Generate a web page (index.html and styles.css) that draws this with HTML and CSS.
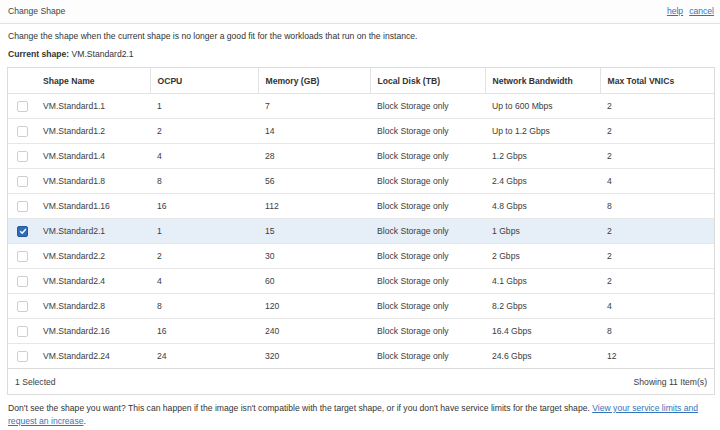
FILE: index.html
```html
<!DOCTYPE html>
<html>
<head>
<meta charset="utf-8">
<link rel="stylesheet" href="styles.css">
</head>
<body>
<div class="page">
  <header class="topbar">
    <span class="title">Change Shape</span>
    <nav class="links"><a href="#">help</a><a href="#">cancel</a></nav>
  </header>
  <main class="content">
    <p class="desc">Change the shape when the current shape is no longer a good fit for the workloads that run on the instance.</p>
    <p class="current"><b>Current shape:</b> VM.Standard2.1</p>
    <div class="grid">
      <table>
        <colgroup>
          <col class="c-check"><col class="c-name"><col class="c-ocpu"><col class="c-mem"><col class="c-disk"><col class="c-net"><col>
        </colgroup>
        <thead>
          <tr>
            <th class="chk"></th>
            <th class="name">Shape Name</th>
            <th>OCPU</th>
            <th>Memory (GB)</th>
            <th>Local Disk (TB)</th>
            <th>Network Bandwidth</th>
            <th>Max Total VNICs</th>
          </tr>
        </thead>
        <tbody>
          <tr><td class="chk"><span class="box"></span></td><td class="name">VM.Standard1.1</td><td>1</td><td>7</td><td>Block Storage only</td><td>Up to 600 Mbps</td><td>2</td></tr>
          <tr><td class="chk"><span class="box"></span></td><td class="name">VM.Standard1.2</td><td>2</td><td>14</td><td>Block Storage only</td><td>Up to 1.2 Gbps</td><td>2</td></tr>
          <tr><td class="chk"><span class="box"></span></td><td class="name">VM.Standard1.4</td><td>4</td><td>28</td><td>Block Storage only</td><td>1.2 Gbps</td><td>2</td></tr>
          <tr><td class="chk"><span class="box"></span></td><td class="name">VM.Standard1.8</td><td>8</td><td>56</td><td>Block Storage only</td><td>2.4 Gbps</td><td>4</td></tr>
          <tr><td class="chk"><span class="box"></span></td><td class="name">VM.Standard1.16</td><td>16</td><td>112</td><td>Block Storage only</td><td>4.8 Gbps</td><td>8</td></tr>
          <tr class="selected"><td class="chk"><span class="box checked"><svg viewBox="0 0 10 10" width="10" height="10"><path d="M2.2 5.2 L4.2 7.2 L7.9 2.9" fill="none" stroke="#fff" stroke-width="1.5"/></svg></span></td><td class="name">VM.Standard2.1</td><td>1</td><td>15</td><td>Block Storage only</td><td>1 Gbps</td><td>2</td></tr>
          <tr><td class="chk"><span class="box"></span></td><td class="name">VM.Standard2.2</td><td>2</td><td>30</td><td>Block Storage only</td><td>2 Gbps</td><td>2</td></tr>
          <tr><td class="chk"><span class="box"></span></td><td class="name">VM.Standard2.4</td><td>4</td><td>60</td><td>Block Storage only</td><td>4.1 Gbps</td><td>2</td></tr>
          <tr><td class="chk"><span class="box"></span></td><td class="name">VM.Standard2.8</td><td>8</td><td>120</td><td>Block Storage only</td><td>8.2 Gbps</td><td>4</td></tr>
          <tr><td class="chk"><span class="box"></span></td><td class="name">VM.Standard2.16</td><td>16</td><td>240</td><td>Block Storage only</td><td>16.4 Gbps</td><td>8</td></tr>
          <tr><td class="chk"><span class="box"></span></td><td class="name">VM.Standard2.24</td><td>24</td><td>320</td><td>Block Storage only</td><td>24.6 Gbps</td><td>12</td></tr>
        </tbody>
      </table>
      <div class="footer"><span>1 Selected</span><span>Showing 11 Item(s)</span></div>
    </div>
    <p class="note">Don't see the shape you want? This can happen if the image isn't compatible with the target shape, or if you don't have service limits for the target shape. <a href="#">View your service limits and</a><br><a href="#">request an increase</a>.</p>
  </main>
</div>
</body>
</html>
```
FILE: styles.css
```css
html, body {
  margin: 0;
  padding: 0;
  background: #fff;
}
body {
  font-family: "Liberation Sans", Arial, sans-serif;
  font-size: 8.6px;
  color: #333;
}
.page {
  width: 720px;
  height: 430px;
  overflow: hidden;
}
.topbar {
  height: 24px;
  border-bottom: 1px solid #e2e2e2;
  display: flex;
  align-items: center;
  justify-content: space-between;
  padding: 0 6px 1px 8px;
  box-sizing: border-box;
  background: #fdfdfd;
}
.title {
  color: #444;
}
.links {
  display: flex;
  gap: 6px;
}
.links a, .note a {
  color: #3473bb;
  text-decoration: underline;
}
.content {
  padding: 0 5px 0 7px;
}
.desc {
  margin: 6px 0 0 1px;
  line-height: 13px;
}
.current {
  margin: 5px 0 0 1px;
  line-height: 13px;
}
.current b {
  font-weight: bold;
  color: #333;
}
.grid {
  margin-top: 6px;
  border: 1px solid #dcdcdc;
  width: 708px;
  box-sizing: border-box;
}
table {
  width: 100%;
  border-collapse: collapse;
  table-layout: fixed;
}
col.c-check { width: 27px; }
col.c-name { width: 115px; }
col.c-ocpu { width: 108px; }
col.c-mem { width: 112px; }
col.c-disk { width: 115px; }
col.c-net { width: 115px; }
th, td {
  text-align: left;
  padding: 0 0 0 7px;
  white-space: nowrap;
  overflow: hidden;
}
th {
  height: 25px;
  font-weight: bold;
  color: #333;
  border-bottom: 1px solid #e3e3e3;
  border-left: 1px solid #e3e3e3;
}
th.chk, th.name {
  border-left: none;
}
td {
  height: 24px;
  border-bottom: 1px solid #e6e6e6;
  color: #3c3c3c;
}
tbody tr:last-child td {
  border-bottom: none;
}
th.name, td.name {
  padding-left: 8px;
}
td.chk, th.chk {
  padding: 0 0 0 9px;
}
.box {
  display: block;
  width: 9px;
  height: 9px;
  border: 1px solid #cfcfcf;
  border-radius: 2px;
  background: #fff;
}
.box.checked {
  background: #2f6db8;
  border-color: #24589a;
  position: relative;
}
.box.checked svg {
  position: absolute;
  left: -0.5px;
  top: -0.5px;
}
tr.selected td {
  background: #e6eff8;
}
.footer {
  height: 25px;
  border-top: 1px solid #dcdcdc;
  display: flex;
  align-items: center;
  justify-content: space-between;
  padding: 0 7px 0 7px;
  color: #3c3c3c;
}
.note {
  margin: 7px 0 0 1px;
  line-height: 13px;
  width: 708px;
}
```
